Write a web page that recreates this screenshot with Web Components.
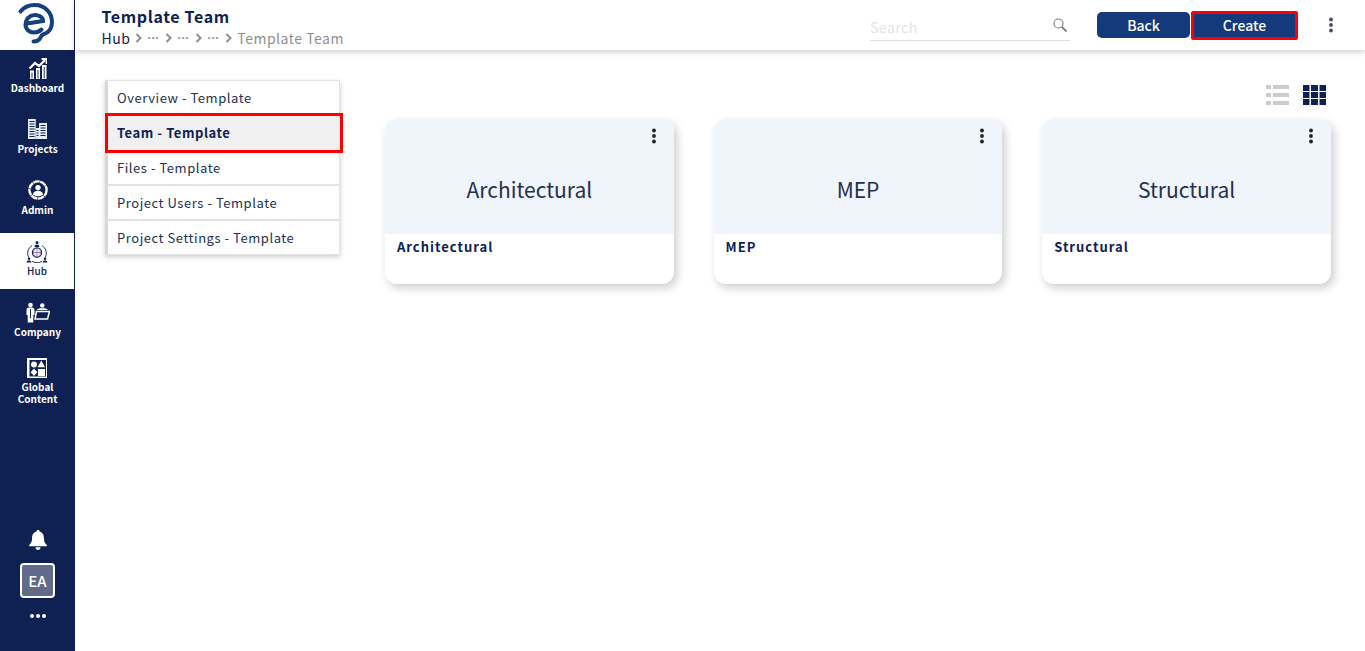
<!DOCTYPE html>
<html lang="en"><head><meta charset="utf-8"><title>Template Team</title>
<style>
html,body{margin:0;height:100%;background:#fff;overflow:hidden}
body{font-family:"Noto Sans CJK JP","Noto Sans",sans-serif;color:#0f2153}
app-shell{height:651px}
</style></head><body>
<app-shell>
  <side-bar slot="side"></side-bar>
  <top-bar slot="top"></top-bar>
  <side-menu slot="menu"></side-menu>
  <view-toggle slot="toggle"></view-toggle>
  <team-card slot="cards" name="Architectural"></team-card>
  <team-card slot="cards" name="MEP"></team-card>
  <team-card slot="cards" name="Structural"></team-card>
</app-shell>
<script>
const def=(name,html)=>customElements.define(name,class extends HTMLElement{
  connectedCallback(){ if(this.shadowRoot)return; const r=this.attachShadow({mode:'open'}); r.innerHTML=typeof html==='function'?html(this):html; }
});
const dots=c=>`<svg width="4" height="16" viewBox="0 0 4 16" fill="${c}"><circle cx="2" cy="2.5" r="1.9"/><circle cx="2" cy="8" r="1.9"/><circle cx="2" cy="13.5" r="1.9"/></svg>`;
const chev=`<svg width="7" height="10" viewBox="0 0 7 10" fill="none" stroke="#8e8e93" stroke-width="2"><path d="M1.500 1l4 4-4 4"/></svg>`;
def('app-shell',`<style>
:host{display:grid;grid-template-columns:75px 1fr;width:1365px;position:relative}
.main{display:flex;flex-direction:column;min-width:0}
.body{display:flex;padding:30px 34px 0 30px}
.left{width:235px;flex:none}
.right{flex:1;margin-left:45px;display:flex;flex-direction:column}
.cards{display:flex;gap:39.8px}
</style><slot name="side"></slot><div class="main"><slot name="top"></slot>
<div class="body"><div class="left"><slot name="menu"></slot></div>
<div class="right"><slot name="toggle"></slot><div class="cards"><slot name="cards"></slot></div></div></div></div>`);
const W='#fff',N='#0f2153';
const icons={
dashboard:`<svg width="18" height="21" viewBox="0 0 18 21" fill="none" stroke="${W}"><path d="M0.500 10.500 6 5l4 3 6-6" stroke-width="2.200"/><path d="M12.500 1h5v5" stroke-width="1.800"/><path fill="${W}" stroke="none" d="M1 12.500h4V21H1zM7 10h4v11H7zM13 7h4.500v14H13z"/><path d="M3 14.500V20.500M9 12v8.500M15.200 9v11.500" stroke="${N}" stroke-width=".9"/></svg>`,
projects:`<svg width="19" height="21" viewBox="0 0 19 21"><path fill="#e6ecf8" d="M0 0h8v20H0zM11 4h8v16h-8zM8 9h3v11H8z"/><path d="M1.500 2.500h5M1.500 5h5M1.500 7.500h5M1.500 10h5M1.500 12.500h5M1.500 15h5M1.500 17.500h5M12.500 6.500h5M12.500 9h5M12.500 11.500h5M12.500 14h5M12.500 16.500h5M8.500 11.500h2M8.500 14h2M8.500 16.500h2" stroke="${N}" stroke-width="1.100"/><path fill="none" stroke="#c9a27a" stroke-width=".8" d="M7.600 0v20"/></svg>`,
admin:`<svg width="22" height="22" viewBox="0 0 22 22" fill="none" style="margin-top:-2px"><circle cx="11" cy="11" r="8.600" stroke="${W}" stroke-width="2.400" stroke-dasharray="6.500 .6"/><circle cx="11" cy="8.600" r="2.700" fill="${W}"/><path d="M5.800 15.500c1-3 3-3.700 5.200-3.700s4.200.7 5.200 3.700c-1.400 1.200-3.200 1.800-5.200 1.800s-3.800-.6-5.200-1.800z" fill="${W}"/></svg>`,
hub:`<svg width="22" height="22" viewBox="0 0 22 22" fill="none" stroke="${N}"><path d="M6 4.500a9 9 0 0 0-3.300 12M16 4.500a9 9 0 0 1 3.300 12M6 20.200a9.500 9.500 0 0 0 10 0" stroke-width=".9"/><circle cx="11" cy="11.500" r="4.600" stroke-width="1.100"/><path d="M6.500 11.500h9M11 7v9M8.800 7.500c-1.600 2.700-1.600 5.300 0 8M13.200 7.500c1.600 2.700 1.600 5.300 0 8" stroke="#7b4f9d" stroke-width=".7"/><path fill="${N}" stroke="none" d="M11 0a1.400 1.400 0 0 1 0 3 1.400 1.400 0 0 1 0-3zM8.600 6c0-2 1-2.600 2.400-2.600S13.400 4 13.400 6zM3 16.500a1.300 1.300 0 0 1 0 2.600 1.300 1.300 0 0 1 0-2.600zM.6 21.500c0-1.500 1-2 2.400-2s2.400.5 2.400 2zM19 16.500a1.300 1.300 0 0 1 0 2.600 1.300 1.300 0 0 1 0-2.600zM16.600 21.500c0-1.500 1-2 2.400-2s2.400.5 2.400 2z"/></svg>`,
company:`<svg width="24" height="21" viewBox="0 0 24 21" fill="${W}"><circle cx="4.500" cy="3" r="2.300"/><path d="M.5 13V8c0-1.600 1-2.500 2.300-2.500h3.400c1.300 0 2.300.9 2.300 2.500v5H7.300v7.500H1.700V13z"/><path d="M4 7h1v9H4z" fill="${N}"/><path d="M14 3.500a2.300 2.300 0 1 1 4.600 0 2.300 2.300 0 0 1-4.600 0zM11 8c0-1.300 1.500-1.800 5.300-1.800S21.600 6.700 21.600 8z"/><path d="M10.500 9.500h13l-2 7.500H9z" fill="none" stroke="${W}" stroke-width="1.500"/></svg>`,
global:`<svg width="20" height="20" viewBox="0 0 20 20" style="margin-left:-2px"><rect width="20" height="20" fill="${W}"/><rect x="2.500" y="2" width="16.500" height="16.500" fill="${N}"/><circle cx="7" cy="6.500" r="3" fill="${W}"/><path d="M14.300 2.500l3.800 6.800h-7.600zM7 10.500l3.400 3.800L7 18l-3.400-3.700z" fill="${W}"/><rect x="11" y="11" width="7" height="7" fill="${W}"/></svg>`};
def('nav-item',t=>`<style>
:host{display:flex;flex-direction:column;align-items:center;height:56px;margin-bottom:5px;padding-top:7px;box-sizing:border-box;font:700 10px/12px "Noto Sans CJK JP","Noto Sans",sans-serif;color:#fff;text-align:center}
:host([active]){background:#fff;color:${N};font-weight:500;margin-right:1px}
:host([tight]){margin-top:-6px}
.i{height:23px;display:flex;align-items:center;justify-content:center}
.t{margin-top:2px}
</style><div class="i">${icons[t.getAttribute('icon')]}</div><div class="t">${t.getAttribute('label')}</div>`);
def('side-bar',`<style>
:host{display:flex;flex-direction:column;width:75px;height:651px;background:${N};box-sizing:border-box}
.logo{height:50px;background:#fff;flex:none;line-height:0;margin-right:1px}
.foot{margin-top:auto;display:flex;flex-direction:column;align-items:center;padding-bottom:33px}
.av{width:31px;height:31px;border:2px solid #fff;border-radius:4px;background:#606b8a;color:#fff;font:500 15px/31px "Noto Sans CJK JP",sans-serif;text-align:center;margin:13px 0 16px}
.more{display:flex;gap:2px}.more i{width:4px;height:4px;border-radius:50%;background:#fff}
</style>
<div class="logo"><svg width="74" height="50" viewBox="0 0 74 50" fill="none" stroke="#163f7e" stroke-width="4" stroke-linecap="round"><path d="M20.500 11.500C24 7 29 5 35 5c10 0 17 8 17 17 0 7-4 11-9 12.500-2 .6-2 2.500-3 4-1.500 2.500-4.500 3-6.500 3"/><path d="M27 23.500l16-2.500c0-4-5-6.500-9-6-5 .5-8.500 4.500-8.500 9.500 0 5 4 8 8.500 8 3 0 5.500-1 7.500-3"/></svg></div>
<nav>
<nav-item icon="dashboard" label="Dashboard"></nav-item>
<nav-item icon="projects" label="Projects"></nav-item>
<nav-item icon="admin" label="Admin"></nav-item>
<nav-item icon="hub" label="Hub" active></nav-item>
<nav-item icon="company" label="Company"></nav-item>
<nav-item icon="global" label="Global<br>Content" tight></nav-item>
</nav>
<div class="foot"><svg width="18" height="20" viewBox="0 0 18 20" fill="#fff"><path d="M9 0c1 0 1.500.7 1.500 1.500C14 2.500 15 5.500 15 9c0 3 1.200 4.500 2.800 6v1.200H.2V15C1.800 13.500 3 12 3 9c0-3.500 1-6.500 4.500-7.500C7.500.7 8 0 9 0zM6.500 17.200h5C11.500 19 10.300 20 9 20s-2.500-1-2.500-2.800z"/></svg>
<div class="av">EA</div><div class="more"><i></i><i></i><i></i></div></div>`);
def('top-bar',`<style>
:host{display:flex;align-items:flex-start;height:50px;background:#fff;box-shadow:0 2px 6px rgba(0,0,0,.2);position:relative;box-sizing:border-box;padding-left:26.500px;font-family:"Noto Sans CJK JP","Noto Sans",sans-serif}
.tt{flex:1;padding-top:5px}
h1{margin:0;font:700 16px/22px "Noto Sans CJK JP",sans-serif;letter-spacing:.65px;color:${N}}
.bc{display:flex;align-items:center;font-size:14px;line-height:20px;letter-spacing:.5px;color:${N};margin-top:1px}
.bc .g{color:#8e8e93;margin-left:1px}.bc svg{margin:0 4px 0 5px}
.e{color:#8e8e93;font:700 12px/20px "Noto Sans",sans-serif;letter-spacing:.5px;width:14px;text-align:center}
.search{width:200px;height:28px;margin-top:12px;border-bottom:1px solid #ddd;display:flex;justify-content:space-between;align-items:center;font-size:14px;letter-spacing:.5px;color:#e3e3e3}
.search span{padding-top:2px}
.search svg{margin-right:3px;margin-top:-3px}
.btn{width:93px;height:26px;background:#143a7b;color:#fff;border-radius:5px;font:500 14px/26px "Noto Sans CJK JP",sans-serif;text-align:center;margin-top:12px}
.back{margin-left:27px}
.create{width:101px;border:3px solid #f00;border-radius:2px;height:23px;line-height:23px;margin:11px 0 0 1px}
.k{margin:17px 32px 0 31px;line-height:0}
</style><div class="tt"><h1>Template Team</h1>
<div class="bc">Hub${chev}<span class="e">···</span>${chev}<span class="e">···</span>${chev}<span class="e">···</span>${chev}<span class="g">Template Team</span></div></div>
<div class="search"><span>Search</span><svg width="14" height="14" viewBox="0 0 14 14" fill="none" stroke="#777" stroke-width="1.100"><circle cx="5.500" cy="5.500" r="4.500"/><path d="M9 9l4.500 4.500" stroke-width="1.800"/></svg></div>
<div class="btn back">Back</div><div class="btn create">Create</div>
<div class="k">${dots('#4a4f5c')}</div>`);
def('side-menu',`<style>
:host{display:block;width:235px;box-sizing:border-box;border:1px solid #e2e2e2;border-left:3px solid #d8d8d8;box-shadow:0 2px 5px rgba(0,0,0,.2);background:#fff;position:relative;font:13px/16px "Noto Sans CJK JP",sans-serif;letter-spacing:.55px;color:#24304f}
div{display:flex;align-items:center;padding:1px 0 0 9px;height:32px;border-bottom:2px solid #e2e2e2}
div:last-child{border-bottom:0}
.a{background:#f0f0f0;color:${N};font-weight:700;box-sizing:border-box;height:40px;margin:-3px -4px -2px -3px;padding:0 0 1px 9px;border:3px solid #f00;position:relative}
</style><div>Overview - Template</div><div class="a">Team - Template</div><div>Files - Template</div><div>Project Users - Template</div><div>Project Settings - Template</div>`);
def('view-toggle',`<style>
:host{display:flex;justify-content:flex-end;gap:14px;height:39px;padding:5px 5px 0 0;box-sizing:border-box}
svg{display:block}
</style><svg width="23" height="20" viewBox="0 0 23 20" fill="#ccc"><path d="M0 0h5v4H0zM7 0h16v4H7zM0 8h5v4H0zM7 8h16v4H7zM0 16h5v4H0zM7 16h16v4H7z"/></svg>
<svg width="23" height="20" viewBox="0 0 23 20" fill="${N}"><path d="M0 0h6.500v6H0zM8 0h7v6H8zM16.500 0H23v6h-6.500zM0 7h6.500v6H0zM8 7h7v6H8zM16.500 7H23v6h-6.500zM0 14h6.500v6H0zM8 14h7v6H8zM16.500 14H23v6h-6.500z"/></svg>`);
def('team-card',t=>`<style>
:host{display:block;width:288.800px;height:165px;border-radius:12px;box-shadow:3px 4px 10px rgba(0,0,0,.2);background:#fff;overflow:hidden;position:relative;font-family:"Noto Sans CJK JP",sans-serif}
.top{height:115px;background:#f0f5fc;display:flex;align-items:center;justify-content:center;font-size:21px;color:#24304f;padding-top:24px;box-sizing:border-box;position:relative}
.m{position:absolute;top:9px;right:18px;line-height:0}
.n{padding:4px 12px;font-weight:700;font-size:13px;line-height:18px;letter-spacing:1px;color:${N}}
</style><div class="top">${t.getAttribute('name')}<div class="m">${dots('#222')}</div></div><div class="n">${t.getAttribute('name')}</div>`);
</script>
</body></html>
